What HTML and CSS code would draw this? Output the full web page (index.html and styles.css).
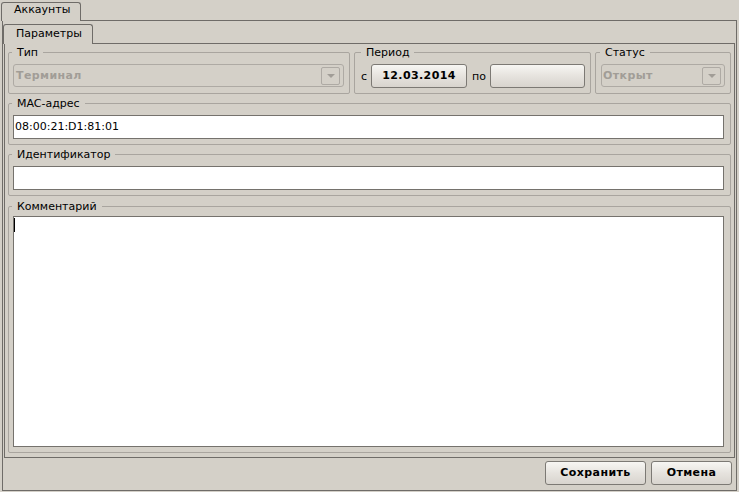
FILE: index.html
```html
<!DOCTYPE html>
<html lang="ru">
<head>
<meta charset="utf-8">
<title>Аккаунты</title>
<link rel="stylesheet" href="styles.css">
</head>
<body>
<div class="window">
  <div class="tabbar tabbar-outer"><div class="tab tab-outer">Аккаунты</div></div>
  <div class="panel panel-outer">
    <div class="tabbar tabbar-inner"><div class="tab tab-inner">Параметры</div></div>
    <div class="panel panel-inner">
      <div class="row-top">
        <div class="group g-type">
          <span class="legend">Тип</span>
          <div class="combo"><span class="combo-text">Терминал</span><span class="combo-btn"><span class="arrow"></span></span></div>
        </div>
        <div class="group g-period">
          <span class="legend legend-period">Период</span>
          <div class="period">
            <span class="lbl lbl-from">с</span>
            <span class="btn btn-from">12.03.2014</span>
            <span class="lbl lbl-to">по</span>
            <span class="btn btn-to"></span>
          </div>
        </div>
        <div class="group g-status">
          <span class="legend legend-status">Статус</span>
          <div class="combo combo-status"><span class="combo-text">Открыт</span><span class="combo-btn"><span class="arrow"></span></span></div>
        </div>
      </div>
      <div class="group g-field g-mac">
        <span class="legend">MAC-адрес</span>
        <div class="input">08:00:21:D1:81:01</div>
      </div>
      <div class="group g-field g-id">
        <span class="legend">Идентификатор</span>
        <div class="input"></div>
      </div>
      <div class="group g-comment">
        <span class="legend">Комментарий</span>
        <div class="textarea"><span class="caret"></span></div>
      </div>
    </div>
    <div class="actions">
      <span class="btn btn-save">Сохранить</span>
      <span class="btn btn-cancel">Отмена</span>
    </div>
  </div>
</div>
</body>
</html>
```
FILE: styles.css
```css
* { box-sizing: border-box; }
html, body { margin: 0; padding: 0; }
body {
  background: #d4d0c8;
  font-family: "DejaVu Sans", sans-serif;
  font-size: 11px;
  line-height: 13px;
  color: #000;
  overflow: hidden;
}
.window {
  width: 739px;
  height: 492px;
  padding: 2px 0 0 2px;
}
.tabbar { display: flex; }
.tabbar-outer { height: 18px; }
.tab {
  position: relative;
  z-index: 1;
  background: #d4d0c8;
  border: 1px solid #6f6c68;
  border-bottom: none;
  border-radius: 3px 3px 0 0;
  white-space: nowrap;
}
.tab-outer {
  margin-left: -1px;
  width: 80px;
  height: 19px;
  padding-left: 12px;
  line-height: 13px;
  padding-top: 0;
}
.panel { border: 1px solid #6f6c68; }
.panel-outer {
  width: 735px;
  height: 471px;
  display: flex;
  flex-direction: column;
}
.tabbar-inner { margin-top: 3px; height: 19px; }
.tab-inner {
  width: 90px;
  height: 20px;
  padding: 2px 0 0 12px;
}
.panel-inner {
  margin: 0 1px;
  height: 415px;
  padding: 8px 3px 4px 3px;
  display: flex;
  flex-direction: column;
}
.row-top {
  display: flex;
  gap: 4px;
  height: 42px;
  margin-bottom: 9px;
}
.group {
  position: relative;
  border: 1px solid #a9a59f;
  border-radius: 2px;
}
.legend {
  position: absolute;
  top: -7px;
  left: 3px;
  padding: 0 5px;
  background: #d4d0c8;
  line-height: 13px;
  white-space: nowrap;
}
.legend-period { left: 6px; padding: 0 4px 0 5px; }
.legend-status { left: 4px; }
.g-type { width: 342px; padding: 11px 5px 6px 4px; }
.g-period { width: 237px; padding: 11px 5px 5px 6px; }
.g-status { width: 136px; padding: 11px 5px 6px 5px; }
.combo {
  display: flex;
  align-items: center;
  height: 23px;
  border: 1px solid #aeaaa4;
  border-radius: 3px;
  padding-left: 2px;
  padding-right: 3px;
}
.combo-status { padding-left: 1px; }
.combo-text {
  font-weight: bold;
  letter-spacing: 0.4px;
  color: #a19d97;
  line-height: 21px;
}
.combo-btn {
  margin-left: auto;
  width: 19px;
  height: 18px;
  border: 1px solid #aeaaa4;
  border-radius: 2px;
  display: flex;
  align-items: center;
  justify-content: center;
}
.arrow {
  width: 0;
  height: 0;
  border-left: 4px solid transparent;
  border-right: 4px solid transparent;
  border-top: 4px solid #a19d97;
}
.period { display: flex; align-items: center; height: 24px; }
.lbl { display: block; line-height: 13px; }
.lbl-from { width: 10px; }
.lbl-to { width: 23px; padding-left: 5px; }
.btn {
  display: block;
  height: 24px;
  border: 1px solid #7c7974;
  border-radius: 3px;
  background: linear-gradient(#f7f6f3, #e6e3de 50%, #d8d4ce);
  font-weight: bold;
  letter-spacing: 0.4px;
  text-align: center;
  line-height: 22px;
  white-space: nowrap;
}
.btn-from { width: 96px; }
.btn-to { width: 95px; }
.g-field { height: 42px; padding: 11px 6px 5px 4px; margin-bottom: 9px; }
.g-id { margin-bottom: 10px; }
.input {
  height: 24px;
  background: #fff;
  border: 1px solid #75726d;
  padding-left: 1px;
  line-height: 22px;
}
.g-comment {
  flex: 1;
  display: flex;
  flex-direction: column;
  padding: 9px 6px 5px 4px;
}
.textarea {
  flex: 1;
  background: #fff;
  border: 1px solid #75726d;
  padding-top: 1px;
}
.caret {
  display: block;
  width: 1px;
  height: 14px;
  background: #000;
}
.actions {
  display: flex;
  justify-content: flex-end;
  gap: 5px;
  margin-top: 3px;
  padding-right: 4px;
}
.btn-save { width: 101px; }
.btn-cancel { width: 81px; }
```
